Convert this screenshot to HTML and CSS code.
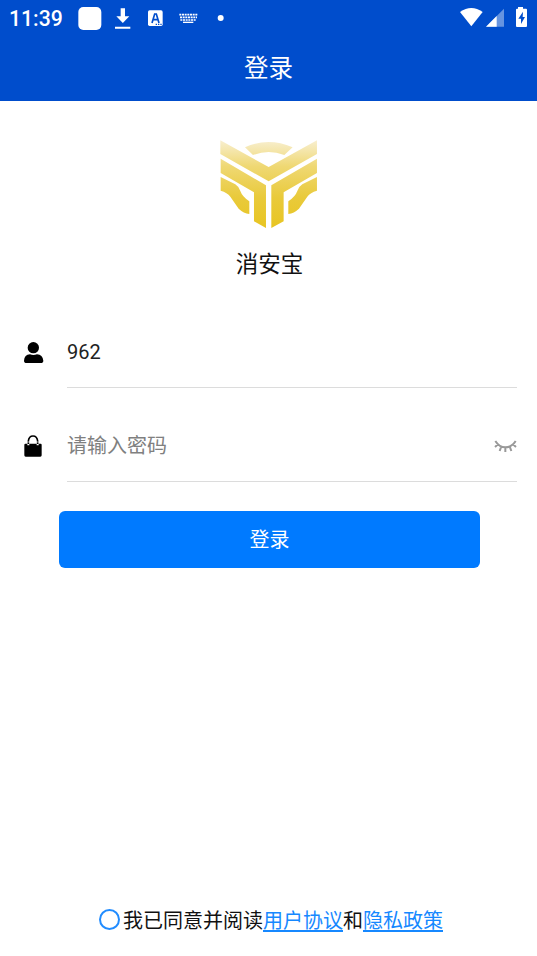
FILE: index.html
```html
<!DOCTYPE html>
<html lang="zh-CN">
<head>
<meta charset="utf-8">
<title>登录</title>
<link rel="stylesheet" href="styles.css">
</head>
<body>
<header class="top">
  <div class="status">
    <span class="clock">11:39</span>
    <svg class="notices" width="150" height="36" viewBox="0 0 450 108" fill="#fff">
      <rect x="1" y="21" width="69" height="69" rx="15"/>
      <path d="M128 25h13v24h13l-19.500 20-19.500-20h13zM111 80h46v6h-46z"/>
      <rect x="210" y="31" width="44" height="47" rx="5"/>
      <path d="M222 69l8-27h5l8 27M226 59h13" fill="none" stroke="#004dcc" stroke-width="5"/>
      <path d="M233 71h4v4h-4zM240 71h4v4h-4zM247 71h4v4h-4z" fill="#004dcc"/>
      <path d="M304 44h55M306 52h51M307 60h47" fill="none" stroke="#fff" stroke-width="5" stroke-dasharray="6 2"/>
      <path d="M315 65h31v4h-31z"/>
      <circle cx="428" cy="54" r="9"/>
    </svg>
    <svg class="system" width="68" height="36" viewBox="0 0 204 108" fill="#fff">
      <path d="M0 36Q34 12 68 36L34 79z"/>
      <path d="M132 26v54H78z" opacity=".4"/>
      <path d="M110 48v32H78z"/>
      <path d="M174 21h15v5h9q3 0 3 3v49q0 3-3 3h-27q-3 0-3-3V29q0-3 3-3h3z"/>
      <path d="M189 35l-14 21h8v16l12-21h-7z" fill="#004dcc"/>
    </svg>
  </div>
  <h1 class="title">登录</h1>
</header>
<main class="page">
  <section class="brand">
    <svg class="logo" viewBox="30 30 292 264">
      <defs>
        <linearGradient id="gold" gradientUnits="userSpaceOnUse" x1="0" y1="30" x2="0" y2="294">
          <stop offset="0" stop-color="#f8efd0"/>
          <stop offset=".3" stop-color="#efd873"/>
          <stop offset=".65" stop-color="#e9ca3b"/>
          <stop offset="1" stop-color="#e8c522"/>
        </linearGradient>
      </defs>
      <g fill="url(#gold)">
        <path d="M105 52Q175 20 248 52L223 75Q176 57 129 75z"/>
        <path d="M31 31L176 111 321 31V72L176 154 31 72z"/>
        <path d="M32 86L168 166V294L132 274V187L32 129z"/>
        <path d="M321 86L184 166V294L221 274V187L321 129z"/>
        <path d="M32 141L76 163Q87 170 91 183Q97 200 118 214V252Q101 250 86 236L61 200Q52 188 32 182z"/>
        <path d="M321 141L277 163Q266 170 262 183Q256 200 235 214V252Q252 250 267 236L292 200Q301 188 321 182z"/>
      </g>
    </svg>
    <div class="name">消安宝</div>
  </section>
  <form class="form">
    <div class="row">
      <svg class="icon" width="20" height="24" viewBox="0 0 60 72">
        <circle cx="28" cy="20" r="17"/>
        <path d="M0 59Q1 41 18 40Q28 44 39 40Q56 41 58 59Q58 66 50 66H8Q0 66 0 59z"/>
      </svg>
      <div class="field"><span class="value">962</span></div>
    </div>
    <div class="row">
      <svg class="icon" width="20" height="24" viewBox="0 0 60 72">
        <path d="M4 26H10V31H16V26H38V31H44V26H50Q53 26 53 30V61Q53 65 49 65H5Q1 65 1 61V30Q1 26 4 26z"/>
        <path d="M13 27V18Q15 3 27 3Q39 3 41 18V27" fill="none" stroke="#000" stroke-width="5"/>
        <path d="M9 21H17M37 21H45" stroke="#fff" stroke-width="2"/>
      </svg>
      <div class="field">
        <span class="hint">请输入密码</span>
        <svg class="eye" width="23" height="16" viewBox="0 0 69 48" fill="none" stroke="#999" stroke-width="6">
          <path d="M4 9Q16 28 34 28Q53 28 65 9M12 19L3 27M22 25L17 39M34 27V42M47 25L52 39M57 19L66 27"/>
        </svg>
      </div>
    </div>
    <button class="submit" type="button">登录</button>
  </form>
  <footer class="terms">
    <span class="radio"></span><span>我已同意并阅读</span><a class="link">用户协议</a><span>和</span><a class="link">隐私政策</a>
  </footer>
</main>
</body>
</html>
```
FILE: styles.css
```css
* { box-sizing: border-box; }
body {
  margin: 0;
  height: 956px;
  display: flex;
  flex-direction: column;
  background: #fff;
  color: #111;
  font: 20px/30px Roboto, "Noto Sans CJK SC", sans-serif;
}
.top { height: 101px; background: #004dcc; color: #fff; }
.status { height: 36px; display: flex; align-items: center; padding: 0 9px; }
.clock { width: 69px; font-size: 21.2px; font-weight: 500; padding-top: 1px; white-space: nowrap; }
.system { margin-left: auto; }
.title { margin: 0; padding-top: 15px; text-align: center; font-size: 24.5px; line-height: 36px; font-weight: 400; }
.page { flex: 1; display: flex; flex-direction: column; }
.brand { display: flex; flex-direction: column; align-items: center; padding-top: 39px; }
.logo { width: 97.3px; height: 88px; }
.name { margin-top: 19px; font-size: 22.5px; line-height: 34px; padding-left: 2px; }
.form { margin-top: 34px; }
.row { height: 73px; display: flex; padding: 0 20px 0 24px; }
.row:first-child { margin-bottom: 21px; }
.icon { margin-top: 26px; }
.field {
  flex: 1;
  margin-left: 23px;
  display: flex;
  justify-content: space-between;
  border-bottom: 1px solid #dcdcdc;
  padding-top: 22px;
}
.value { color: #222; }
.hint { color: #808080; }
.eye { margin-top: 7px; }
.submit {
  display: block;
  width: 421px;
  height: 57px;
  margin: 29px 0 0 59px;
  padding: 1px 0 0;
  border: 0;
  border-radius: 6px;
  background: #007aff;
  color: #fff;
  font: inherit;
}
.terms { margin: auto 0 20px; padding-left: 99px; display: flex; white-space: nowrap; }
.radio { width: 21px; height: 21px; margin: 3px 3px 0 0; border: 2px solid #218cff; border-radius: 50%; }
.link { color: #1688ff; text-decoration: underline; text-decoration-thickness: 2px; text-underline-offset: 2px; }
```
